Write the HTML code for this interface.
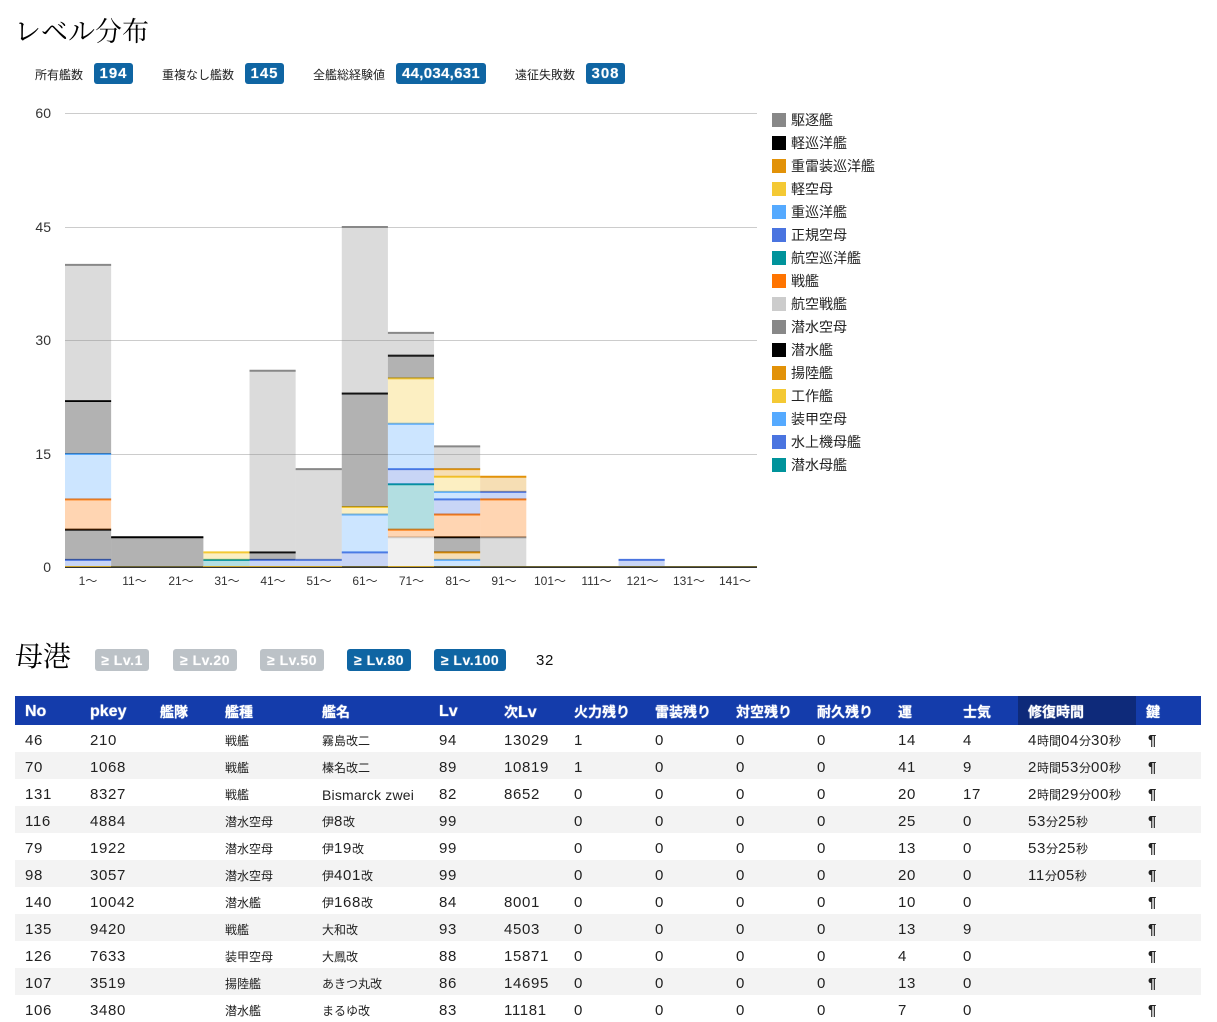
<!DOCTYPE html>
<html lang="ja"><head><meta charset="utf-8"><title>レベル分布</title>
<style>
html,body{margin:0;padding:0;background:#fff}
body{width:1217px;height:1019px;overflow:hidden;position:relative;font-family:"Liberation Sans","Noto Sans CJK JP",sans-serif;color:#222}
.abs,h1,.lb,.bd{position:absolute;white-space:nowrap}
h1{margin:0;font-family:"Liberation Serif","Noto Serif CJK SC",serif;font-weight:400;font-size:27px;line-height:36px;color:#000}
.lb{font-size:12px;line-height:20px;top:65px;color:#222}
.bd{height:21px;line-height:21px;border-radius:3px;background:#0f65a3;color:#fff;font-weight:700;font-size:14px;text-align:center;letter-spacing:.55px;text-shadow:0 0 1px rgba(255,255,255,.5)}
.w{font-size:15px;letter-spacing:.95px;line-height:22px}
.w2{font-size:15px;letter-spacing:.3px;line-height:22px}
.g{background:#bcc2c7}
#chart{position:absolute;left:0;top:0}
#chart text{font-family:"Liberation Sans","Noto Sans CJK JP",sans-serif;fill:#333}
.s rect{fill:currentColor;fill-opacity:.3;stroke:none}
.s path{stroke:currentColor;stroke-width:2;fill:none;vector-effect:non-scaling-stroke}
.a{color:#888}.b{color:#000}.c{color:#e29208}.d{color:#f4c934}.e{color:#55aaff}.f{color:#4a74e0}.g2{color:#00939b}.h{color:#ff7400}.i{color:#ccc}
.sw{position:absolute;left:772px;width:14px;height:14px}
.lg{position:absolute;left:791px;font-size:14px;line-height:20px;color:#222;white-space:nowrap}
table{position:absolute;left:15px;top:696px;width:1186px;border-collapse:collapse;table-layout:fixed}
th{height:27px;padding:2px 0 0 10px;background:#143cab;color:#fff;text-align:left;font-size:16px;font-weight:700;white-space:nowrap;overflow:hidden;text-shadow:0 0 1px #fff}
th.on{background:#0e2a7a}
th u{font-size:14px}
td{height:23px;padding:4px 0 0 10px;font-size:15px;letter-spacing:.65px;white-space:nowrap;color:#222;overflow:hidden}
tr:nth-child(even) td{background:#f3f3f3}
td.j{font-size:12px;letter-spacing:0}
td.n{font-size:14px;letter-spacing:.2px}
td.p{padding-left:12px;font-weight:700;font-size:15px}
u{text-decoration:none;font-size:12px;letter-spacing:0}
</style></head><body>
<h1 style="left:14px;top:14px">レベル分布</h1>
<div class="lb" style="left:35px">所有艦数</div><div class="bd w" style="left:94px;top:63px;width:39px">194</div>
<div class="lb" style="left:162px">重複なし艦数</div><div class="bd w" style="left:245px;top:63px;width:39px">145</div>
<div class="lb" style="left:313px">全艦総経験値</div><div class="bd w2" style="left:396px;top:63px;width:90px">44,034,631</div>
<div class="lb" style="left:515px">遠征失敗数</div><div class="bd w" style="left:586px;top:63px;width:39px">308</div>

<svg id="chart" width="900" height="600" viewBox="0 0 900 600">
<g stroke="#ccc" stroke-width="1"><path d="M65 113.500H757M65 227.500H757M65 340.500H757M65 454.500H757"/></g>
<g font-size="14" text-anchor="end"><text x="51" y="118">60</text><text x="51" y="232">45</text><text x="51" y="345">30</text><text x="51" y="459">15</text><text x="51" y="572">0</text></g>
<g font-size="12" text-anchor="middle"><text x="88" y="585">1〜</text><text x="134.500" y="585">11〜</text><text x="181" y="585">21〜</text><text x="227" y="585">31〜</text><text x="273" y="585">41〜</text><text x="319" y="585">51〜</text><text x="365" y="585">61〜</text><text x="411.500" y="585">71〜</text><text x="458" y="585">81〜</text><text x="504" y="585">91〜</text><text x="550" y="585">101〜</text><text x="596.500" y="585">111〜</text><text x="642.500" y="585">121〜</text><text x="689" y="585">131〜</text><text x="735" y="585">141〜</text></g>
<g class="s" transform="translate(65,567.500) scale(46.13,-7.567)">
<!-- 1 -->
<g class="f"><rect x="0" y="0" width="1" height="1"/><path d="M0 1H1"/></g>
<g class="b"><rect x="0" y="1" width="1" height="4"/><path d="M0 5H1"/></g>
<g class="h"><rect x="0" y="5" width="1" height="4"/><path d="M0 9H1"/></g>
<g class="e"><rect x="0" y="9" width="1" height="6"/><path d="M0 15H1"/></g>
<g class="b"><rect x="0" y="15" width="1" height="7"/><path d="M0 22H1"/></g>
<g class="a"><rect x="0" y="22" width="1" height="18"/><path d="M0 40H1"/></g>
<!-- 11,21 -->
<g class="b"><rect x="1" y="0" width="2" height="4"/><path d="M1 4H3"/></g>
<!-- 31 -->
<g class="g2"><rect x="3" y="0" width="1" height="1"/><path d="M3 1H4"/></g>
<g class="d"><rect x="3" y="1" width="1" height="1"/><path d="M3 2H4"/></g>
<!-- 41 -->
<g class="f"><rect x="4" y="0" width="1" height="1"/><path d="M4 1H5"/></g>
<g class="b"><rect x="4" y="1" width="1" height="1"/><path d="M4 2H5"/></g>
<g class="a"><rect x="4" y="2" width="1" height="24"/><path d="M4 26H5"/></g>
<!-- 51 -->
<g class="f"><rect x="5" y="0" width="1" height="1"/><path d="M5 1H6"/></g>
<g class="a"><rect x="5" y="1" width="1" height="12"/><path d="M5 13H6"/></g>
<!-- 61 -->
<g class="f"><rect x="6" y="0" width="1" height="2"/><path d="M6 2H7"/></g>
<g class="e"><rect x="6" y="2" width="1" height="5"/><path d="M6 7H7"/></g>
<g class="d"><rect x="6" y="7" width="1" height="1"/><path d="M6 8H7"/></g>
<g class="b"><rect x="6" y="8" width="1" height="15"/><path d="M6 23H7"/></g>
<g class="a"><rect x="6" y="23" width="1" height="22"/><path d="M6 45H7"/></g>
<!-- 71 -->
<g class="i"><rect x="7" y="0" width="1" height="4"/><path d="M7 4H8"/></g>
<g class="h"><rect x="7" y="4" width="1" height="1"/><path d="M7 5H8"/></g>
<g class="g2"><rect x="7" y="5" width="1" height="6"/><path d="M7 11H8"/></g>
<g class="f"><rect x="7" y="11" width="1" height="2"/><path d="M7 13H8"/></g>
<g class="e"><rect x="7" y="13" width="1" height="6"/><path d="M7 19H8"/></g>
<g class="d"><rect x="7" y="19" width="1" height="6"/><path d="M7 25H8"/></g>
<g class="b"><rect x="7" y="25" width="1" height="3"/><path d="M7 28H8"/></g>
<g class="a"><rect x="7" y="28" width="1" height="3"/><path d="M7 31H8"/></g>
<!-- 81 -->
<g class="e"><rect x="8" y="0" width="1" height="1"/><path d="M8 1H9"/></g>
<g class="c"><rect x="8" y="1" width="1" height="1"/><path d="M8 2H9"/></g>
<g class="b"><rect x="8" y="2" width="1" height="2"/><path d="M8 4H9"/></g>
<g class="h"><rect x="8" y="4" width="1" height="3"/><path d="M8 7H9"/></g>
<g class="f"><rect x="8" y="7" width="1" height="2"/><path d="M8 9H9"/></g>
<g class="e"><rect x="8" y="9" width="1" height="1"/><path d="M8 10H9"/></g>
<g class="d"><rect x="8" y="10" width="1" height="2"/><path d="M8 12H9"/></g>
<g class="c"><rect x="8" y="12" width="1" height="1"/><path d="M8 13H9"/></g>
<g class="a"><rect x="8" y="13" width="1" height="3"/><path d="M8 16H9"/></g>
<!-- 91 -->
<g class="a"><rect x="9" y="0" width="1" height="4"/><path d="M9 4H10"/></g>
<g class="h"><rect x="9" y="4" width="1" height="5"/><path d="M9 9H10"/></g>
<g class="f"><rect x="9" y="9" width="1" height="1"/><path d="M9 10H10"/></g>
<g class="c"><rect x="9" y="10" width="1" height="2"/><path d="M9 12H10"/></g>
<!-- 121 -->
<g class="f"><rect x="12" y="0" width="1" height="1"/><path d="M12 1H13"/></g>
</g>
<path d="M65 567.500H757" stroke="#333" stroke-width="1"/>
<path d="M65 566.500H757" stroke="#6b6535" stroke-width="1"/>
<path d="M65 566.500H111M203 566.500H342M388 566.500H434" stroke="#c9a227" stroke-width="1"/>
</svg>

<div class="sw" style="top:113px;background:#888"></div><div class="lg" style="top:110px">駆逐艦</div>
<div class="sw" style="top:136px;background:#000"></div><div class="lg" style="top:133px">軽巡洋艦</div>
<div class="sw" style="top:159px;background:#e29208"></div><div class="lg" style="top:156px">重雷装巡洋艦</div>
<div class="sw" style="top:182px;background:#f4c934"></div><div class="lg" style="top:179px">軽空母</div>
<div class="sw" style="top:205px;background:#55aaff"></div><div class="lg" style="top:202px">重巡洋艦</div>
<div class="sw" style="top:228px;background:#4a74e0"></div><div class="lg" style="top:225px">正規空母</div>
<div class="sw" style="top:251px;background:#00939b"></div><div class="lg" style="top:248px">航空巡洋艦</div>
<div class="sw" style="top:274px;background:#ff7400"></div><div class="lg" style="top:271px">戦艦</div>
<div class="sw" style="top:297px;background:#ccc"></div><div class="lg" style="top:294px">航空戦艦</div>
<div class="sw" style="top:320px;background:#888"></div><div class="lg" style="top:317px">潜水空母</div>
<div class="sw" style="top:343px;background:#000"></div><div class="lg" style="top:340px">潜水艦</div>
<div class="sw" style="top:366px;background:#e29208"></div><div class="lg" style="top:363px">揚陸艦</div>
<div class="sw" style="top:389px;background:#f4c934"></div><div class="lg" style="top:386px">工作艦</div>
<div class="sw" style="top:412px;background:#55aaff"></div><div class="lg" style="top:409px">装甲空母</div>
<div class="sw" style="top:435px;background:#4a74e0"></div><div class="lg" style="top:432px">水上機母艦</div>
<div class="sw" style="top:458px;background:#00939b"></div><div class="lg" style="top:455px">潜水母艦</div>

<h1 style="left:15px;top:640px;font-size:28px">母港</h1>
<div class="bd g" style="left:95px;top:649px;width:54px;height:22px;line-height:23px">≥ Lv.1</div>
<div class="bd g" style="left:173px;top:649px;width:64px;height:22px;line-height:23px">≥ Lv.20</div>
<div class="bd g" style="left:260px;top:649px;width:64px;height:22px;line-height:23px">≥ Lv.50</div>
<div class="bd" style="left:347px;top:649px;width:64px;height:22px;line-height:23px">≥ Lv.80</div>
<div class="bd" style="left:434px;top:649px;width:72px;height:22px;line-height:23px">≥ Lv.100</div>
<div class="abs" style="left:536px;top:651px;font-size:15px;line-height:20px;letter-spacing:.6px;color:#111">32</div>

<table>
<colgroup><col style="width:65px"><col style="width:70px"><col style="width:65px"><col style="width:97px"><col style="width:117px"><col style="width:65px"><col style="width:70px"><col style="width:81px"><col style="width:81px"><col style="width:81px"><col style="width:81px"><col style="width:65px"><col style="width:65px"><col style="width:118px"><col style="width:65px"></colgroup>
<thead><tr><th>No</th><th>pkey</th><th><u>艦隊</u></th><th><u>艦種</u></th><th><u>艦名</u></th><th>Lv</th><th><u>次</u>Lv</th><th><u>火力残り</u></th><th><u>雷装残り</u></th><th><u>対空残り</u></th><th><u>耐久残り</u></th><th><u>運</u></th><th><u>士気</u></th><th class="on"><u>修復時間</u></th><th><u>鍵</u></th></tr></thead>
<tbody>
<tr><td>46</td><td>210</td><td></td><td class="j">戦艦</td><td class="j">霧島改二</td><td>94</td><td>13029</td><td>1</td><td>0</td><td>0</td><td>0</td><td>14</td><td>4</td><td>4<u>時間</u>04<u>分</u>30<u>秒</u></td><td class="p">¶</td></tr>
<tr><td>70</td><td>1068</td><td></td><td class="j">戦艦</td><td class="j">榛名改二</td><td>89</td><td>10819</td><td>1</td><td>0</td><td>0</td><td>0</td><td>41</td><td>9</td><td>2<u>時間</u>53<u>分</u>00<u>秒</u></td><td class="p">¶</td></tr>
<tr><td>131</td><td>8327</td><td></td><td class="j">戦艦</td><td class="n">Bismarck zwei</td><td>82</td><td>8652</td><td>0</td><td>0</td><td>0</td><td>0</td><td>20</td><td>17</td><td>2<u>時間</u>29<u>分</u>00<u>秒</u></td><td class="p">¶</td></tr>
<tr><td>116</td><td>4884</td><td></td><td class="j">潜水空母</td><td><u>伊</u>8<u>改</u></td><td>99</td><td></td><td>0</td><td>0</td><td>0</td><td>0</td><td>25</td><td>0</td><td>53<u>分</u>25<u>秒</u></td><td class="p">¶</td></tr>
<tr><td>79</td><td>1922</td><td></td><td class="j">潜水空母</td><td><u>伊</u>19<u>改</u></td><td>99</td><td></td><td>0</td><td>0</td><td>0</td><td>0</td><td>13</td><td>0</td><td>53<u>分</u>25<u>秒</u></td><td class="p">¶</td></tr>
<tr><td>98</td><td>3057</td><td></td><td class="j">潜水空母</td><td><u>伊</u>401<u>改</u></td><td>99</td><td></td><td>0</td><td>0</td><td>0</td><td>0</td><td>20</td><td>0</td><td>11<u>分</u>05<u>秒</u></td><td class="p">¶</td></tr>
<tr><td>140</td><td>10042</td><td></td><td class="j">潜水艦</td><td><u>伊</u>168<u>改</u></td><td>84</td><td>8001</td><td>0</td><td>0</td><td>0</td><td>0</td><td>10</td><td>0</td><td></td><td class="p">¶</td></tr>
<tr><td>135</td><td>9420</td><td></td><td class="j">戦艦</td><td class="j">大和改</td><td>93</td><td>4503</td><td>0</td><td>0</td><td>0</td><td>0</td><td>13</td><td>9</td><td></td><td class="p">¶</td></tr>
<tr><td>126</td><td>7633</td><td></td><td class="j">装甲空母</td><td class="j">大鳳改</td><td>88</td><td>15871</td><td>0</td><td>0</td><td>0</td><td>0</td><td>4</td><td>0</td><td></td><td class="p">¶</td></tr>
<tr><td>107</td><td>3519</td><td></td><td class="j">揚陸艦</td><td class="j">あきつ丸改</td><td>86</td><td>14695</td><td>0</td><td>0</td><td>0</td><td>0</td><td>13</td><td>0</td><td></td><td class="p">¶</td></tr>
<tr><td>106</td><td>3480</td><td></td><td class="j">潜水艦</td><td class="j">まるゆ改</td><td>83</td><td>11181</td><td>0</td><td>0</td><td>0</td><td>0</td><td>7</td><td>0</td><td></td><td class="p">¶</td></tr>
</tbody></table>
</body></html>
